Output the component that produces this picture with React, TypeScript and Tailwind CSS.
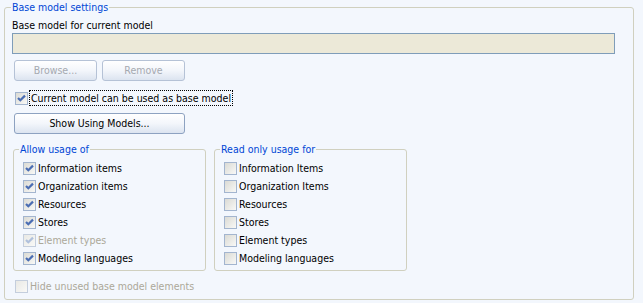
import React from "react";

function Box({ checked, disabled }: { checked?: boolean; disabled?: boolean }) {
  const id = React.useId().replace(/:/g, "");
  return (
    <svg width="13" height="13" viewBox="0 0 13 13" className="shrink-0 block">
      <defs>
        <linearGradient id={"g" + id} x1="0" y1="0" x2="1" y2="1">
          <stop offset="0" stopColor={disabled ? "#E8E8E4" : "#D9D9D3"} />
          <stop offset="1" stopColor="#FAFAF8" />
        </linearGradient>
      </defs>
      <rect x="0.5" y="0.5" width="12" height="12" fill={"url(#g" + id + ")"} stroke={disabled ? "#C4CEDD" : "#A3B5CF"} />
      {checked && (
        <path d="M3 6 L5.3 8.3 L10 3.6" fill="none" stroke={disabled ? "#AFC0DC" : "#4A6DB3"} strokeWidth="2.2" />
      )}
    </svg>
  );
}

function Row({ label, checked, disabled }: { label: string; checked?: boolean; disabled?: boolean }) {
  return (
    <div className="flex items-center h-[18px] gap-[2px]">
      <Box checked={checked} disabled={disabled} />
      <span className={disabled ? "text-[#ACA899] leading-[14px]" : "leading-[14px]"}>{label}</span>
    </div>
  );
}

function Btn({ children, disabled, w }: { children: React.ReactNode; disabled?: boolean; w: string }) {
  return (
    <div
      className={
        "h-[21px] rounded-[3px] border flex items-center justify-center bg-gradient-to-b from-[#FFFFFF] via-[#F3F6FB] to-[#DCE4F0] " +
        w +
        (disabled ? " border-[#B5C2D6] text-[#A5A9B0]" : " border-[#8DA2C1] text-black")
      }
    >
      {children}
    </div>
  );
}

export default function App() {
  const left = [
    ["Information items", true, false],
    ["Organization items", true, false],
    ["Resources", true, false],
    ["Stores", true, false],
    ["Element types", true, true],
    ["Modeling languages", true, false],
  ] as const;
  const right = [
    "Information Items",
    "Organization Items",
    "Resources",
    "Stores",
    "Element types",
    "Modeling languages",
  ];
  return (
    <div className="w-[643px] h-[303px] bg-[#F3F7FD] pl-[4px] text-[10.5px] text-black font-['DejaVu_Sans_Condensed','Liberation_Sans',sans-serif]">
      <fieldset className="w-[630px] h-[300px] border border-[#D0D0BF] rounded-[3px] p-0 m-0">
        <legend className="ml-[6px] px-[1px] leading-[14px] text-[#0046D5]">Base model settings</legend>
        <div className="pl-[7px] flex flex-col items-start">
          <div className="mt-[4px] leading-[14px]">Base model for current model</div>
          <div className="mt-[1px] w-[603px] h-[21px] bg-[#ECE9D8] border border-[#7F9DB9]" />
          <div className="mt-[6px] ml-[2px] flex gap-[5px]">
            <Btn disabled w="w-[83px]">Browse...</Btn>
            <Btn disabled w="w-[83px]">Remove</Btn>
          </div>
          <div className="mt-[9px] ml-[3px] h-[16px] flex items-center gap-[1px]">
            <Box checked />
            <span className="border border-dotted border-black px-[1px] leading-[14px]">Current model can be used as base model</span>
          </div>
          <div className="mt-[7px] ml-[2px]">
            <Btn w="w-[171px]">Show Using Models...</Btn>
          </div>
          <div className="mt-[8px] ml-[1px] flex gap-[8px]">
            <fieldset className="w-[193px] h-[129px] border border-[#D0D0BF] rounded-[3px] p-0 m-0">
              <legend className="ml-[5px] px-[1px] leading-[14px] text-[#0046D5]">Allow usage of</legend>
              <div className="pl-[9px] pt-[3px]">
                {left.map(([l, c, d]) => (
                  <Row key={l} label={l} checked={c} disabled={d} />
                ))}
              </div>
            </fieldset>
            <fieldset className="w-[193px] h-[129px] border border-[#D0D0BF] rounded-[3px] p-0 m-0">
              <legend className="ml-[5px] px-[1px] leading-[14px] text-[#0046D5]">Read only usage for</legend>
              <div className="pl-[9px] pt-[3px]">
                {right.map((l) => (
                  <Row key={l} label={l} />
                ))}
              </div>
            </fieldset>
          </div>
          <div className="mt-[7px] ml-[3px] h-[16px] flex items-center gap-[2px]">
            <Box disabled />
            <span className="text-[#ACA899] leading-[14px]">Hide unused base model elements</span>
          </div>
        </div>
      </fieldset>
    </div>
  );
}
